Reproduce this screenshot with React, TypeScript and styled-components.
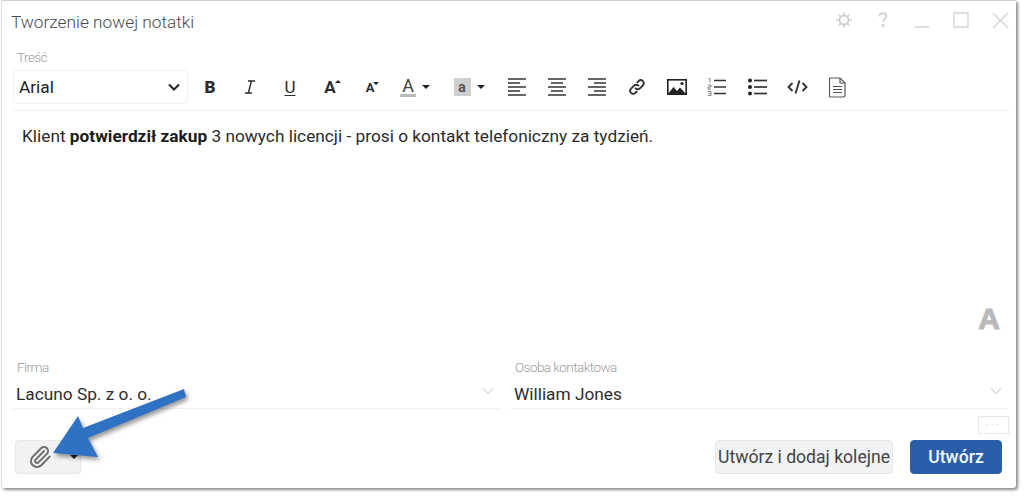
import React from 'react';
import styled, { createGlobalStyle } from 'styled-components';

const GlobalStyle = createGlobalStyle`
  html, body { margin: 0; padding: 0; background: #fff; }
  body { font-family: Roboto, "Liberation Sans", sans-serif; width: 1024px; height: 496px; overflow: hidden; }
`;

const Page = styled.div`
  position: relative;
  width: 1024px;
  height: 496px;
  box-sizing: border-box;
  padding: 0 0 0 1px;
`;

const Dialog = styled.div`
  width: 1015px;
  height: 488px;
  box-sizing: border-box;
  background: #fff;
  border-top: 1px solid #cfcfcf;
  border-left: 1px solid #e2e2e2;
  border-radius: 0 0 3px 3px;
  box-shadow: 2px 2px 3px rgba(0, 0, 0, 0.45);
  display: flex;
  flex-direction: column;
  padding: 0 7px 0 11px;
`;

const TitleBar = styled.div`
  height: 49px;
  padding-bottom: 7px;
  box-sizing: border-box;
  display: flex;
  align-items: center;
  justify-content: space-between;
  flex-shrink: 0;
`;

const Title = styled.div`
  font-size: 17.28px;
  font-weight: 300;
  color: #4a4a4a;
  margin-left: -2px;
`;

const WindowButtons = styled.div`
  display: flex;
  align-items: center;
  gap: 23px;
  margin-right: 0;
  margin-bottom: 4px;
`;

const FieldLabel = styled.div`
  font-size: 13.5px;
  font-weight: 300;
  letter-spacing: -0.55px;
  color: #9c9c9c;
  line-height: 14px;
  padding-left: 4px;
`;

const Toolbar = styled.div`
  display: flex;
  align-items: center;
  height: 41px;
  margin-top: 6px;
  border-bottom: 1px solid #efefef;
  padding-bottom: 6px;
  box-sizing: border-box;
  flex-shrink: 0;
`;

const FontSelect = styled.div`
  width: 175px;
  height: 34px;
  box-sizing: border-box;
  border: 1px solid #f1f1f1;
  border-radius: 3px;
  display: flex;
  align-items: center;
  justify-content: space-between;
  padding: 0 6px 0 5px;
  font-size: 17.28px;
  color: #222;
  margin-right: 2px;
`;

const ToolButton = styled.div<{ $width?: number }>`
  width: ${(p) => p.$width ?? 40}px;
  height: 34px;
  display: flex;
  align-items: center;
  justify-content: center;
  flex-shrink: 0;
  color: #333;
`;

const SplitButton = styled(ToolButton)`
  justify-content: flex-start;
  padding-left: 10px;
  box-sizing: border-box;
  gap: 6px;
`;

const Caret = styled.span`
  width: 0;
  height: 0;
  border-left: 4px solid transparent;
  border-right: 4px solid transparent;
  border-top: 4px solid #222;
`;

const LetterIcon = styled.span<{ $size: number; $weight?: number; $underline?: boolean }>`
  font-family: Roboto, "Liberation Sans", sans-serif;
  font-size: ${(p) => p.$size}px;
  font-weight: ${(p) => p.$weight ?? 400};
  text-decoration: ${(p) => (p.$underline ? 'underline' : 'none')};
  text-underline-offset: 2px;
  color: #2c2c2c;
  position: relative;
  line-height: 1;
`;

const SuperDot = styled.span<{ $up?: boolean }>`
  position: absolute;
  top: 1px;
  right: -5px;
  width: 0;
  height: 0;
  border-left: 3px solid transparent;
  border-right: 3px solid transparent;
  ${(p) => (p.$up ? 'border-bottom: 3px solid #222;' : 'border-top: 3px solid #222;')}
`;

const ColorA = styled.span`
  font-family: Roboto, sans-serif;
  font-size: 18px;
  line-height: 16px;
  color: #444;
  border-bottom: 3px solid #bdbdbd;
  width: 16px;
  text-align: center;
  display: block;
`;

const HighlightA = styled.span`
  font-family: Roboto, sans-serif;
  font-size: 14px;
  font-weight: 700;
  background: #cfcfcf;
  color: #555;
  width: 17px;
  height: 18px;
  display: flex;
  align-items: center;
  justify-content: center;
`;

const Editor = styled.div`
  position: relative;
  flex: 1;
  padding: 15px 0 0 9px;
  font-size: 17.28px;
  line-height: 20px;
  color: #2b2b2b;

  strong { font-weight: 700; color: #1c1c1c; }
`;

const FontMark = styled.div`
  position: absolute;
  right: 9px;
  bottom: 26px;
  font-family: "Liberation Sans", sans-serif;
  font-size: 30px;
  line-height: 30px;
  font-weight: 700;
  color: #b9b9b9;
  -webkit-text-stroke: 1px #b9b9b9;
`;

const FieldsRow = styled.div`
  display: flex;
  gap: 11px;
  flex-shrink: 0;
`;

const Field = styled.div<{ $width: number }>`
  width: ${(p) => p.$width}px;
  display: flex;
  flex-direction: column;
`;

const FieldValue = styled.div`
  display: flex;
  align-items: center;
  justify-content: space-between;
  height: 35px;
  box-sizing: border-box;
  border-bottom: 1px solid #f0f0f0;
  padding: 7px 5px 2px 3px;
  font-size: 17.28px;
  color: #2e2e2e;

  svg { margin-top: -6px; }
`;

const MoreRow = styled.div`
  display: flex;
  justify-content: flex-end;
  margin-top: 7px;
  flex-shrink: 0;
`;

const MoreButton = styled.div`
  width: 31px;
  height: 18px;
  box-sizing: border-box;
  border: 1px solid #e8e8e8;
  color: #c4c4c4;
  font-size: 5px;
  letter-spacing: 3px;
  display: flex;
  align-items: center;
  justify-content: center;
`;

const Footer = styled.div`
  display: flex;
  align-items: center;
  justify-content: space-between;
  margin-top: 6px;
  padding: 0 7px 0 2px;
  height: 34px;
  margin-bottom: 14px;
  flex-shrink: 0;
`;

const AttachButton = styled.div`
  width: 66px;
  height: 34px;
  box-sizing: border-box;
  background: #f0f2f4;
  border: 1px solid #e6e8ea;
  border-radius: 4px;
  display: flex;
  align-items: center;
  padding-left: 12px;
  gap: 18px;
`;

const Actions = styled.div`
  display: flex;
  gap: 17px;
`;

const Button = styled.div<{ $primary?: boolean }>`
  height: 34px;
  box-sizing: border-box;
  border-radius: 4px;
  display: flex;
  align-items: center;
  justify-content: center;
  font-size: 17.6px;
  width: ${(p) => (p.$primary ? 92 : 178)}px;
  background: ${(p) => (p.$primary ? '#2a5ea8' : '#f0f2f4')};
  border: 1px solid ${(p) => (p.$primary ? '#2a5ea8' : '#e4e6e8')};
  color: ${(p) => (p.$primary ? '#f4f7fb' : '#444')};
  font-weight: ${(p) => (p.$primary ? 500 : 400)};
`;

const ArrowOverlay = styled.svg`
  position: absolute;
  left: 0;
  top: 0;
  pointer-events: none;
  filter: drop-shadow(2px 3px 2px rgba(0, 0, 0, 0.4));
`;

const Chevron = ({ color = '#222', size = 14, weight = 2 }: { color?: string; size?: number; weight?: number }) => (
  <svg width={size} height={size} viewBox="0 0 14 14" fill="none" stroke={color} strokeWidth={weight}>
    <path d="M2 4.5 L7 9.5 L12 4.5" />
  </svg>
);

const Lines = ({ rows }: { rows: [number, number][] }) => (
  <svg width="20" height="18" viewBox="0 0 20 18" stroke="#333" strokeWidth="1.5">
    {rows.map(([a, b], i) => (
      <line key={i} x1={a} x2={b} y1={1 + i * 4} y2={1 + i * 4} />
    ))}
  </svg>
);

const App = () => (
  <Page>
    <GlobalStyle />
    <Dialog>
      <TitleBar>
        <Title>Tworzenie nowej notatki</Title>
        <WindowButtons>
          <svg width="16" height="16" viewBox="0 0 16 16" fill="none" stroke="#d2d2d2" strokeWidth="2">
            <circle cx="8" cy="8" r="4.6" />
            <path d="M8 0.5v2.5M8 13v2.5M0.5 8h2.5M13 8h2.5M2.7 2.7l1.8 1.8M11.5 11.5l1.8 1.8M13.3 2.7l-1.8 1.8M4.5 11.5l-1.8 1.8" strokeWidth="1.7" />
          </svg>
          <svg width="16" height="16" viewBox="0 0 16 16" fill="none" stroke="#d2d2d2" strokeWidth="1.8">
            <path d="M4.5 4.5C4.5 2.5 6 1.2 8 1.2s3.4 1.2 3.4 3c0 2.6-3.4 2.8-3.4 5.4" />
            <circle cx="8" cy="13.6" r="0.7" />
          </svg>
          <svg width="16" height="16" viewBox="0 0 16 16" stroke="#d2d2d2" strokeWidth="1.4">
            <line x1="0.5" x2="15.5" y1="15" y2="15" />
          </svg>
          <svg width="16" height="16" viewBox="0 0 16 16" fill="none" stroke="#d2d2d2" strokeWidth="1.4">
            <rect x="1" y="1" width="14" height="14" />
          </svg>
          <svg width="17" height="17" viewBox="0 0 16 16" fill="none" stroke="#d2d2d2" strokeWidth="1.2">
            <path d="M1 1L15 15M15 1L1 15" />
          </svg>
        </WindowButtons>
      </TitleBar>

      <FieldLabel>Treść</FieldLabel>
      <Toolbar>
        <FontSelect>
          Arial
          <Chevron />
        </FontSelect>
        <ToolButton><LetterIcon $size={17} $weight={900}>B</LetterIcon></ToolButton>
        <ToolButton>
          <svg width="12" height="14" viewBox="0 0 12 14" fill="none" stroke="#2c2c2c" strokeWidth="1.4">
            <path d="M4 1h7M1 13h7M7.4 1L4.4 13" />
          </svg>
        </ToolButton>
        <ToolButton><LetterIcon $size={17} $underline>U</LetterIcon></ToolButton>
        <ToolButton>
          <LetterIcon $size={17} $weight={700}>A<SuperDot $up /></LetterIcon>
        </ToolButton>
        <ToolButton>
          <LetterIcon $size={13} $weight={700}>A<SuperDot /></LetterIcon>
        </ToolButton>
        <SplitButton $width={53.5}><ColorA>A</ColorA><Caret /></SplitButton>
        <SplitButton $width={53.5}><HighlightA>a</HighlightA><Caret /></SplitButton>
        <ToolButton><Lines rows={[[1, 19], [1, 13], [1, 19], [1, 13], [1, 19]]} /></ToolButton>
        <ToolButton><Lines rows={[[1, 19], [4, 16], [1, 19], [4, 16], [1, 19]]} /></ToolButton>
        <ToolButton><Lines rows={[[1, 19], [7, 19], [1, 19], [7, 19], [1, 19]]} /></ToolButton>
        <ToolButton>
          <svg width="18" height="18" viewBox="0 0 18 18" fill="none" stroke="#333" strokeWidth="1.9" strokeLinecap="round">
            <path d="M7.6 10.4a3 3 0 0 0 4.3 0l3-3a3 3 0 0 0-4.3-4.3L9.4 4.3" />
            <path d="M10.4 7.6a3 3 0 0 0-4.3 0l-3 3a3 3 0 0 0 4.3 4.3l1.2-1.2" />
          </svg>
        </ToolButton>
        <ToolButton>
          <svg width="20" height="18" viewBox="0 0 20 18">
            <rect x="0.8" y="1.8" width="18.4" height="14.4" fill="none" stroke="#222" strokeWidth="1.6" />
            <path d="M1 16l5.5-7 3.5 4 3-3.5 6 6.5z" fill="#222" />
            <circle cx="15" cy="5.5" r="1.6" fill="#222" />
          </svg>
        </ToolButton>
        <ToolButton>
          <svg width="20" height="20" viewBox="0 0 20 20" stroke="#333" fill="none">
            <path d="M7 3.5h12M7 10h12M7 16.5h12" strokeWidth="1.7" />
            <path d="M1.5 1.5h1.5v4M1 8h3v2H1v2h3M1 14.5h3v4H1M1.5 16.5H4" strokeWidth="0.8" stroke="#666" />
          </svg>
        </ToolButton>
        <ToolButton>
          <svg width="19" height="18" viewBox="0 0 19 18">
            <g stroke="#333" strokeWidth="1.7">
              <line x1="6" x2="19" y1="2.5" y2="2.5" />
              <line x1="6" x2="19" y1="9" y2="9" />
              <line x1="6" x2="19" y1="15.5" y2="15.5" />
            </g>
            <g fill="#222">
              <circle cx="2" cy="2.5" r="2" />
              <circle cx="2" cy="9" r="2" />
              <circle cx="2" cy="15.5" r="2" />
            </g>
          </svg>
        </ToolButton>
        <ToolButton>
          <svg width="21" height="16" viewBox="0 0 21 16" fill="none" stroke="#333" strokeWidth="1.9">
            <path d="M5.5 4L1.5 8l4 4M15.5 4l4 4-4 4M12.5 1.5L8.5 14.5" />
          </svg>
        </ToolButton>
        <ToolButton>
          <svg width="17" height="21" viewBox="0 0 17 21" fill="none" stroke="#555" strokeWidth="1.2">
            <path d="M1.5 1h9.5l5 5v12.5a1.5 1.5 0 0 1-1.5 1.5h-13a1 1 0 0 1-1-1V2a1 1 0 0 1 1-1z" />
            <path d="M11 1v5h5M4 9.5h9M4 12.5h9M4 15.5h9" />
          </svg>
        </ToolButton>
      </Toolbar>

      <Editor>
        Klient <strong>potwierdził zakup</strong> 3 nowych licencji - prosi o kontakt telefoniczny za tydzień.
        <FontMark>A</FontMark>
      </Editor>

      <FieldsRow>
        <Field $width={487}>
          <FieldLabel>Firma</FieldLabel>
          <FieldValue>
            Lacuno Sp. z o. o.
            <Chevron color="#dcdcdc" weight={1.4} />
          </FieldValue>
        </Field>
        <Field $width={497}>
          <FieldLabel>Osoba kontaktowa</FieldLabel>
          <FieldValue>
            William Jones
            <Chevron color="#dcdcdc" weight={1.4} />
          </FieldValue>
        </Field>
      </FieldsRow>
      <MoreRow>
        <MoreButton>•••</MoreButton>
      </MoreRow>

      <Footer>
        <AttachButton>
          <svg width="24" height="24" viewBox="0 0 24 24" fill="none" stroke="#6e6e6e" strokeWidth="2" strokeLinecap="round" strokeLinejoin="round">
            <path d="m16 6-8.414 8.586a2 2 0 0 0 2.829 2.829l8.414-8.586a4 4 0 1 0-5.657-5.657l-8.379 8.551a6 6 0 1 0 8.485 8.485l8.379-8.551" />
          </svg>
          <Caret />
        </AttachButton>
        <Actions>
          <Button>Utwórz i dodaj kolejne</Button>
          <Button $primary>Utwórz</Button>
        </Actions>
      </Footer>
    </Dialog>
    <ArrowOverlay width="1024" height="496" viewBox="0 0 1024 496">
      <path d="M184 389L186 397L88 438L98 457L53 453L78 416L83 428Z" fill="#2f72c4" />
    </ArrowOverlay>
  </Page>
);

export default App;
